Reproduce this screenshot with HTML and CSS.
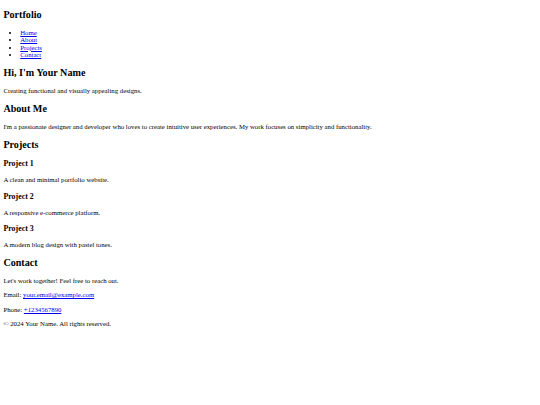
FILE: index.html
```html
<!DOCTYPE html>
<html lang="en">
<head>
<meta charset="utf-8">
<title>Portfolio</title>
<link rel="stylesheet" href="styles.css">
</head>
<body class="page">
<header class="site-header">
  <h1 class="site-title">Portfolio</h1>
  <nav class="site-nav">
    <ul class="nav-list">
      <li><a class="link" href="#home">Home</a></li>
      <li><a class="link" href="#about">About</a></li>
      <li><a class="link" href="#projects">Projects</a></li>
      <li><a class="link" href="#contact">Contact</a></li>
    </ul>
  </nav>
</header>
<section class="section" id="home">
  <h2 class="section-title">Hi, I'm Your Name</h2>
  <p class="text">Creating functional and visually appealing designs.</p>
</section>
<section class="section" id="about">
  <h2 class="section-title">About Me</h2>
  <p class="text">I'm a passionate designer and developer who loves to create intuitive user experiences. My work focuses on simplicity and functionality.</p>
</section>
<section class="section" id="projects">
  <h2 class="section-title">Projects</h2>
  <div class="project">
    <h3 class="project-title">Project 1</h3>
    <p class="text">A clean and minimal portfolio website.</p>
  </div>
  <div class="project">
    <h3 class="project-title">Project 2</h3>
    <p class="text">A responsive e-commerce platform.</p>
  </div>
  <div class="project">
    <h3 class="project-title">Project 3</h3>
    <p class="text">A modern blog design with pastel tones.</p>
  </div>
</section>
<section class="section" id="contact">
  <h2 class="section-title">Contact</h2>
  <p class="text">Let's work together! Feel free to reach out.</p>
  <p class="text">Email: <a class="link" href="mailto:your.email@example.com">your.email@example.com</a></p>
  <p class="text">Phone: <a class="link" href="tel:+1234567890">+1234567890</a></p>
</section>
<footer class="site-footer">
  <p class="text">&copy; 2024 Your Name. All rights reserved.</p>
</footer>
</body>
</html>
```
FILE: styles.css
```css
html {
  background: #ffffff;
}

.page {
  margin: 3.375px;
  font-family: "Liberation Serif", "Times New Roman", serif;
  font-size: 6.75px;
  line-height: 1.12;
  color: #000000;
}

.site-title {
  font-size: 10.125px;
  line-height: 1.15;
  font-weight: bold;
  margin: 5.4px 0 8.4px;
}

.section-title {
  font-size: 10.125px;
  line-height: 1.15;
  font-weight: bold;
  margin: 8.4px 0;
}

.project-title {
  font-size: 7.9px;
  line-height: 1.15;
  font-weight: bold;
  margin: 7.9px 0;
}

.nav-list {
  margin: 6.75px 0;
  padding-left: 16.875px;
  list-style: disc;
}

.text {
  margin: 6.75px 0;
}

.link {
  color: #0000ee;
  text-decoration: underline;
}
```
